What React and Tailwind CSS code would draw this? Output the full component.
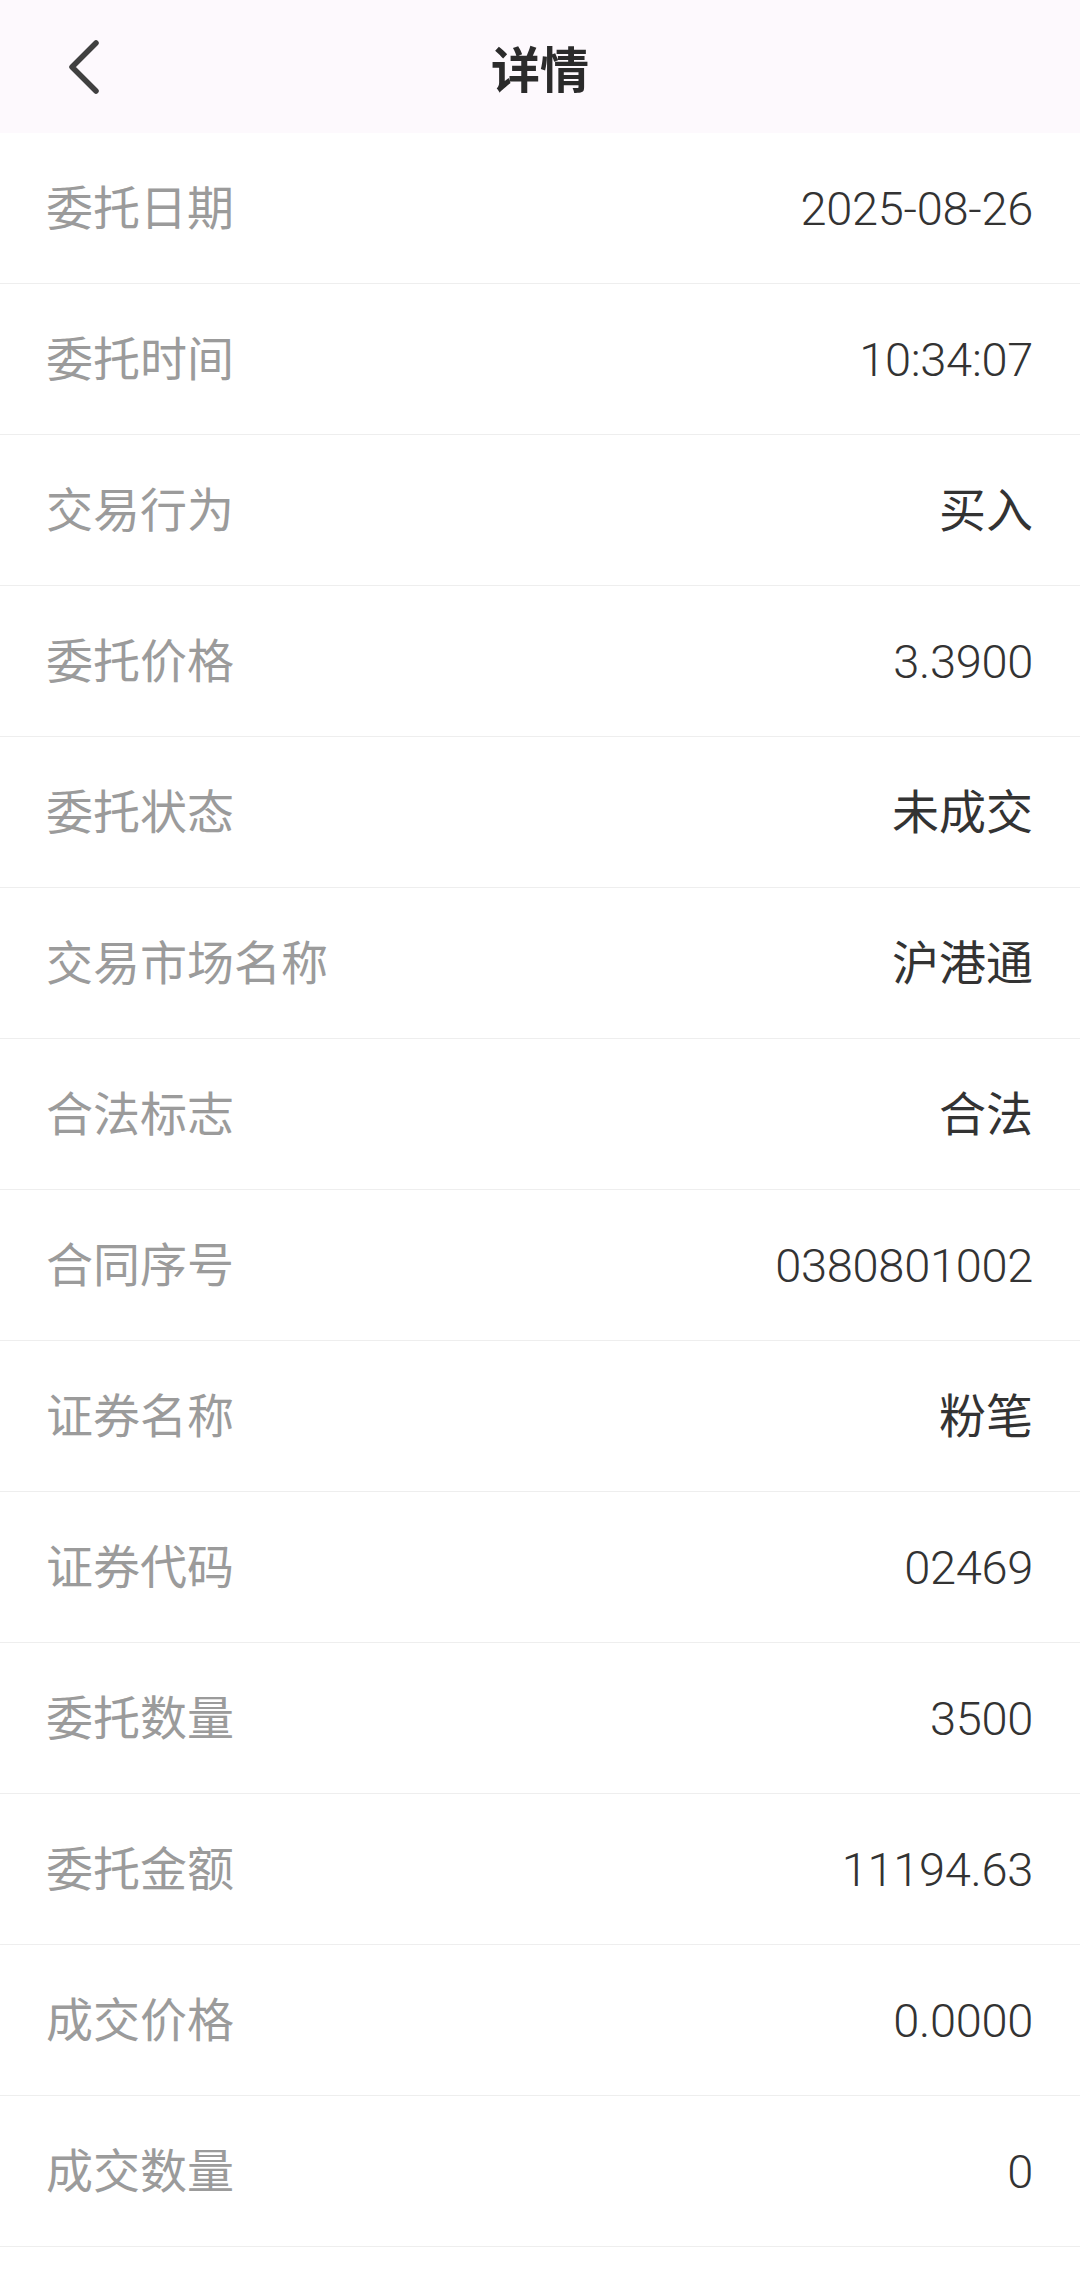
import React from "react";

const rows = [
  ["委托日期", "2025-08-26"],
  ["委托时间", "10:34:07"],
  ["交易行为", "买入"],
  ["委托价格", "3.3900"],
  ["委托状态", "未成交"],
  ["交易市场名称", "沪港通"],
  ["合法标志", "合法"],
  ["合同序号", "0380801002"],
  ["证券名称", "粉笔"],
  ["证券代码", "02469"],
  ["委托数量", "3500"],
  ["委托金额", "11194.63"],
  ["成交价格", "0.0000"],
  ["成交数量", "0"],
];

export default function App() {
  return (
    <div className="w-[1080px] min-h-[2289px] bg-white font-['Roboto','Noto_Sans_CJK_SC',sans-serif]">
      <div className="relative h-[133px] bg-[#fdf9fd] flex items-center justify-center">
        <svg
          className="absolute left-[60px] top-[34px]"
          width="50"
          height="66"
          viewBox="0 0 50 66"
          fill="none"
        >
          <path
            d="M36 9 L12 33 L36 57"
            stroke="#404040"
            strokeWidth="5.5"
            strokeLinecap="round"
            strokeLinejoin="round"
          />
        </svg>
        <span className="text-[49px] font-bold text-[#2b2b2b] leading-none font-['Noto_Sans_CJK_SC',sans-serif]">
          详情
        </span>
      </div>
      <div className="flex flex-col">
        {rows.map(([label, value]) => {
          const cjk = /[\u4e00-\u9fff]/.test(value);
          return (
            <div
              key={label}
              className="h-[151px] flex items-center justify-between pl-[46px] pr-[47px] border-b border-[#eeeeee]"
            >
              <span className="mb-[8px] text-[47px] leading-none text-[#9b9b9b] font-['Noto_Sans_CJK_SC',sans-serif]">
                {label}
              </span>
              {cjk ? (
                <span className="mb-[8px] text-[47px] leading-none text-[#333333] font-['Noto_Sans_CJK_SC',sans-serif]">
                  {value}
                </span>
              ) : (
                <span className="text-[47px] leading-none text-[#333333] font-light tracking-[-0.3px]">
                  {value}
                </span>
              )}
            </div>
          );
        })}
      </div>
    </div>
  );
}
